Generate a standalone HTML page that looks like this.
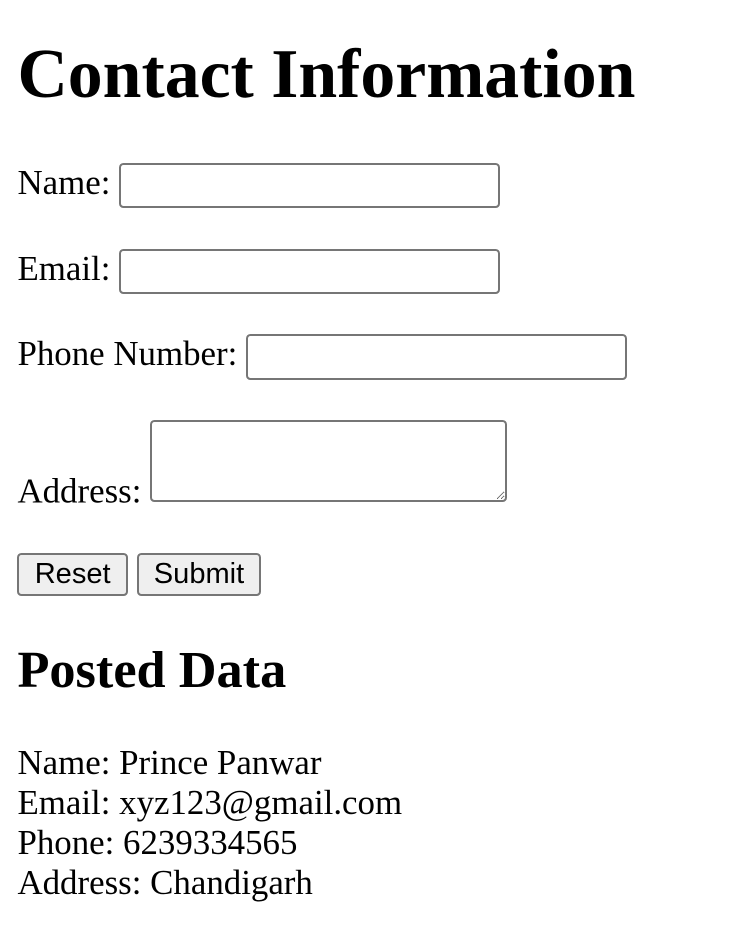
<!DOCTYPE html>
<html><head><style>
html{zoom:2.18}
body{margin:8px;font-family:"Liberation Serif",serif;font-size:16px;color:#000;background:#fff}
h1{font-size:32px;margin:16px 0 22px}
h2{font-size:24px;margin:20px 0}
input,textarea,button{font-family:"Liberation Sans",sans-serif;font-size:13.33px}
input{width:169px;padding:1px 2px;border:1px solid #767676;border-radius:2px;height:17px}
textarea{width:158px;height:32px;border:1px solid #767676;border-radius:2px}
button{background:#efefef;border:1px solid #767676;border-radius:2px;padding:1.5px 7px}
p{margin:16px 0}
form p{margin:18.5px 0}
form p.addr{margin-top:17.5px;margin-bottom:17.5px}
</style></head><body>
<h1>Contact Information</h1>
<form>
<p>Name: <input type="text"></p>
<p>Email: <input type="text"></p>
<p>Phone Number: <input type="text"></p>
<p class="addr">Address: <textarea></textarea></p>
<p><button type="button">Reset</button> <button type="button">Submit</button></p>
</form>
<h2>Posted Data</h2>
<p>Name: Prince Panwar<br>Email: xyz123@gmail.com<br>Phone: 6239334565<br>Address: Chandigarh</p>
</body></html>
